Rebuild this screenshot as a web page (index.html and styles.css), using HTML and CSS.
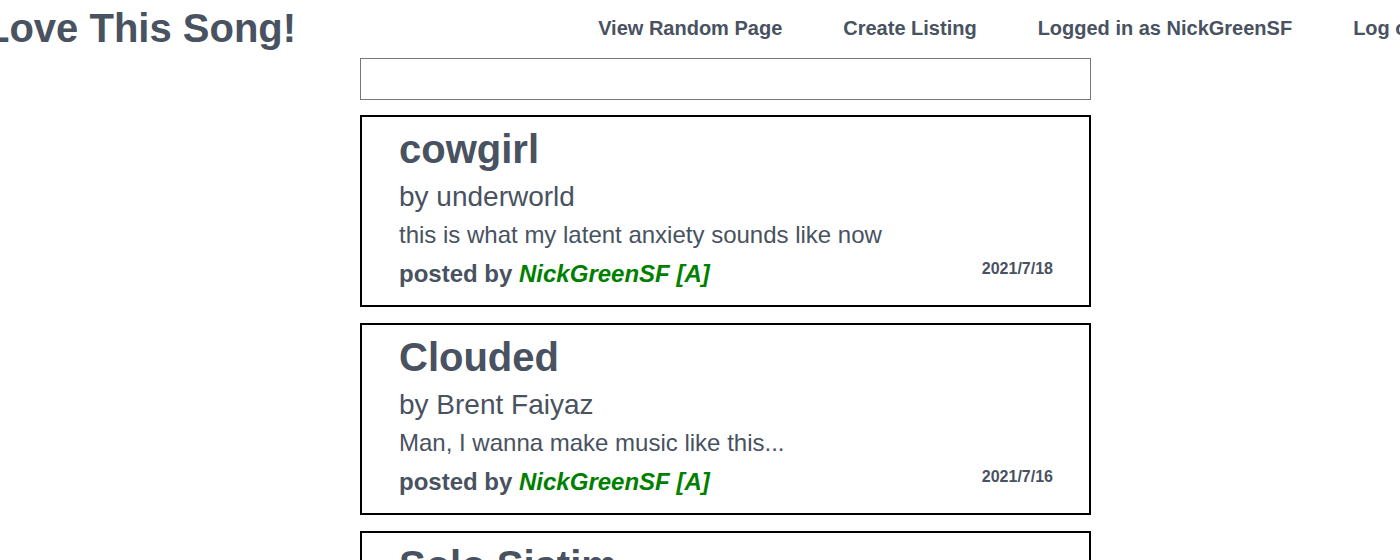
FILE: index.html
```html
<!DOCTYPE html>
<html lang="en">
<head>
<meta charset="utf-8">
<title>Love This Song!</title>
<link rel="stylesheet" href="styles.css">
</head>
<body>
<header class="site-header">
  <h1 class="site-title">Love This Song!</h1>
  <nav class="site-nav">
    <a class="nav-link" href="#">View Random Page</a>
    <a class="nav-link" href="#">Create Listing</a>
    <a class="nav-link" href="#">Logged in as NickGreenSF</a>
    <a class="nav-link" href="#">Log out</a>
  </nav>
</header>
<main class="feed">
  <input class="search" type="text" aria-label="Search">
  <article class="card">
    <h2 class="song-title">cowgirl</h2>
    <p class="song-artist">by underworld</p>
    <p class="song-desc">this is what my latent anxiety sounds like now</p>
    <div class="card-footer">
      <p class="posted">posted by <span class="user">NickGreenSF [A]</span></p>
      <span class="date">2021/7/18</span>
    </div>
  </article>
  <article class="card">
    <h2 class="song-title">Clouded</h2>
    <p class="song-artist">by Brent Faiyaz</p>
    <p class="song-desc">Man, I wanna make music like this...</p>
    <div class="card-footer">
      <p class="posted">posted by <span class="user">NickGreenSF [A]</span></p>
      <span class="date">2021/7/16</span>
    </div>
  </article>
  <article class="card">
    <h2 class="song-title">Solo Sistim</h2>
    <p class="song-artist">by underworld</p>
    <p class="song-desc">&nbsp;</p>
    <div class="card-footer">
      <p class="posted">posted by <span class="user">NickGreenSF [A]</span></p>
      <span class="date">2021/7/15</span>
    </div>
  </article>
</main>
</body>
</html>
```
FILE: styles.css
```css
html {
  overflow: hidden;
}

body {
  margin: 0;
  font-family: "Liberation Sans", Arial, sans-serif;
  color: #485260;
  background: #fff;
}

.site-header {
  display: flex;
  align-items: center;
  padding-top: 5px;
  margin-left: -15px;
  width: max-content;
}

.site-title {
  margin: 0;
  font-size: 40px;
  line-height: 46px;
  font-weight: 700;
  white-space: nowrap;
}

.site-nav {
  display: flex;
  gap: 61px;
  margin-left: 302px;
}

.nav-link {
  font-size: 20px;
  line-height: 23px;
  font-weight: 700;
  color: #485260;
  text-decoration: none;
  white-space: nowrap;
}

.feed {
  width: 731px;
  margin: 7px 0 0 360px;
  display: flex;
  flex-direction: column;
  gap: 16px;
}

.search {
  box-sizing: border-box;
  width: 731px;
  height: 42px;
  margin: 0 0 -1px;
  border: 1px solid #767676;
  border-radius: 0;
  padding: 0 8px;
  font-size: 16px;
}

.card {
  box-sizing: border-box;
  border: 2px solid #000;
  padding: 9px 36px 17px 37px;
}

.song-title {
  margin: 0;
  font-size: 40px;
  line-height: 46px;
  font-weight: 700;
}

.song-artist {
  margin: 9px 0 0;
  font-size: 28px;
  line-height: 32px;
}

.song-desc {
  margin: 8px 0 0;
  font-size: 24px;
  line-height: 28px;
}

.card-footer {
  display: flex;
  justify-content: space-between;
  align-items: flex-start;
  margin-top: 11px;
}

.posted {
  margin: 0;
  font-size: 24px;
  line-height: 28px;
  font-weight: 700;
}

.user {
  color: #008000;
  font-style: italic;
}

.date {
  font-size: 16px;
  line-height: 18px;
  font-weight: 700;
}
```
